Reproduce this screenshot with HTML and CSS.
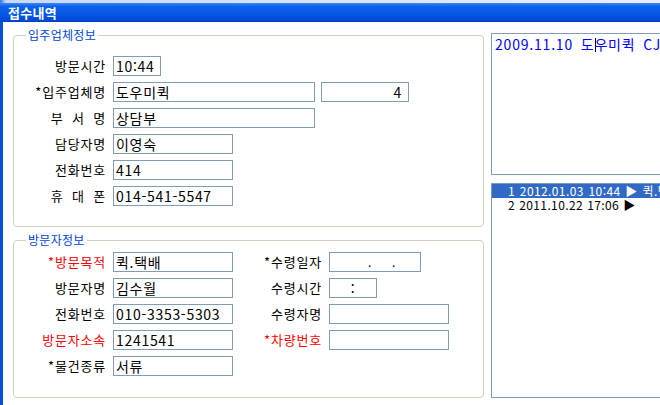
FILE: index.html
```html
<!DOCTYPE html>
<html lang="ko">
<head>
<meta charset="utf-8">
<title>접수내역</title>
<link rel="stylesheet" href="styles.css">
</head>
<body>
<div class="window">
  <div class="topstrip"></div>
  <div class="titlebar">접수내역</div>
  <div class="main">
    <div class="leftcol">
      <fieldset class="group g1">
        <legend>입주업체정보</legend>
        <div class="row"><span class="lbl">방문시간</span><div class="field w48">10:44</div></div>
        <div class="row"><span class="lbl">*입주업체명</span><div class="field w202">도우미퀵</div><div class="field w88 num">4</div></div>
        <div class="row"><span class="lbl spaced">부 서 명</span><div class="field w202">상담부</div></div>
        <div class="row"><span class="lbl">담당자명</span><div class="field w120">이영숙</div></div>
        <div class="row"><span class="lbl">전화번호</span><div class="field w120">414</div></div>
        <div class="row"><span class="lbl spaced">휴 대 폰</span><div class="field w120">014-541-5547</div></div>
      </fieldset>
      <fieldset class="group g2">
        <legend>방문자정보</legend>
        <div class="grid2">
          <span class="lbl red">*방문목적</span><div class="field w120">퀵.택배</div>
          <span class="lbl lbl2">*수령일자</span><div class="field w92 date"><span class="seg s1"></span>.<span class="seg s2"></span>.</div>
          <span class="lbl">방문자명</span><div class="field w120">김수월</div>
          <span class="lbl lbl2">수령시간</span><div class="field w48 center">:</div>
          <span class="lbl">전화번호</span><div class="field w120">010-3353-5303</div>
          <span class="lbl lbl2">수령자명</span><div class="field w120"></div>
          <span class="lbl red">방문자소속</span><div class="field w120">1241541</div>
          <span class="lbl lbl2 red">*차량번호</span><div class="field w120"></div>
          <span class="lbl">*물건종류</span><div class="field w120">서류</div>
        </div>
      </fieldset>
    </div>
    <div class="rightcol">
      <div class="memo">2009.11.10 도<span class="caret"></span>우미퀵 CJ</div>
      <div class="list">
        <div class="item selected">1 2012.01.03 10:44 ▶ 퀵.택배</div>
        <div class="item">2 2011.10.22 17:06 ▶</div>
      </div>
    </div>
  </div>
</div>
</body>
</html>
```
FILE: styles.css
```css
html, body {
  margin: 0;
  padding: 0;
  background: #ffffff;
  overflow: hidden;
}

body {
  font-family: "Noto Sans CJK KR", "Noto Sans", sans-serif;
  color: #000;
}

.window {
  width: 660px;
  height: 405px;
  display: flex;
  flex-direction: column;
  overflow: hidden;
}

.topstrip {
  height: 3px;
  flex: none;
  background: linear-gradient(90deg, #2f74e8 0px, #c9d9f3 6px, #e9eff9 100%);
}

.titlebar {
  height: 19px;
  flex: none;
  box-sizing: border-box;
  padding-left: 8px;
  color: #ffffff;
  font-weight: bold;
  font-size: 13px;
  letter-spacing: 0.3px;
  line-height: 19px;
  background: linear-gradient(180deg, #3a86f6 0%, #0c62ea 18%, #0557e6 60%, #0449d6 90%, #003bc0 100%);
}

.main {
  flex: 1;
  display: flex;
  min-height: 0;
  border-left: 3px solid #0b4fd6;
  padding-left: 10px;
}

.leftcol {
  flex: none;
  width: 471px;
  display: flex;
  flex-direction: column;
  gap: 6px;
  padding-top: 6px;
}

.group {
  margin: 0;
  border: 1px solid #d0d0bf;
  border-radius: 4px;
  padding: 0;
  min-width: 0;
}

.group legend {
  margin-left: 12px;
  padding: 0 2px;
  font-size: 12px;
  line-height: 14px;
  letter-spacing: 0.3px;
  color: #0046d5;
}

.g1 {
  padding: 14px 0 20px 0;
  display: flex;
  flex-direction: column;
  gap: 6px;
}

.g2 {
  padding: 5px 0 21px 0;
}

.row {
  display: flex;
  align-items: center;
  gap: 6px;
  height: 20px;
}

.row .lbl {
  margin-right: -6px;
}

.lbl {
  width: 99px;
  flex: none;
  box-sizing: border-box;
  padding-right: 7px;
  text-align: right;
  font-size: 13px;
  line-height: 20px;
  letter-spacing: 0.8px;
  white-space: pre;
}

.spaced {
  word-spacing: 4px;
}

.red {
  color: #ff0000;
}

.grid2 {
  display: grid;
  grid-template-columns: 99px 120px 96px auto;
  grid-auto-rows: 20px;
  row-gap: 6px;
  align-items: center;
}

.lbl2 {
  width: 96px;
}

.grid2 .field {
  justify-self: start;
}

.field {
  height: 20px;
  box-sizing: border-box;
  border: 1px solid #7f9db9;
  background: #fff;
  font-size: 14px;
  line-height: 18px;
  letter-spacing: 0.7px;
  padding-left: 2px;
  white-space: pre;
  overflow: hidden;
  flex: none;
}

.w48 { width: 48px; }
.w88 { width: 88px; }
.w92 { width: 92px; }
.w120 { width: 120px; }
.w202 { width: 202px; }

.num {
  text-align: right;
  padding-right: 6px;
}

.center {
  text-align: center;
  padding-left: 0;
}

.date {
  font-size: 12px;
}

.seg {
  display: inline-block;
}

.s1 { width: 36px; }
.s2 { width: 20px; }

.rightcol {
  flex: none;
  width: 200px;
  margin-left: 7px;
  padding-top: 11px;
  display: flex;
  flex-direction: column;
  gap: 8px;
}

.memo {
  height: 142px;
  box-sizing: border-box;
  border: 1px solid #7f9db9;
  padding: 2px 0 0 3px;
  color: #0000ff;
  font-size: 14px;
  line-height: 16px;
  letter-spacing: 0.8px;
  word-spacing: 3px;
  white-space: nowrap;
  overflow: hidden;
}

.caret {
  display: inline-block;
  width: 1px;
  height: 14px;
  margin-left: 1px;
  margin-right: -2px;
  background: #000;
  vertical-align: -2px;
}

.list {
  height: 215px;
  box-sizing: border-box;
  border: 1px solid #7f9db9;
  overflow: hidden;
}

.item {
  height: 14px;
  padding-left: 16px;
  font-size: 12px;
  line-height: 14px;
  letter-spacing: 0.4px;
  word-spacing: 1px;
  white-space: nowrap;
}

.selected {
  background: #316ac5;
  color: #ffffff;
}
```
